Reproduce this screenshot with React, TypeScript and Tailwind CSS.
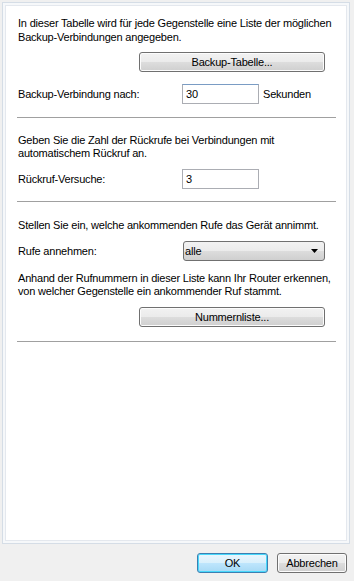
import React from 'react';

const font = { fontFamily: '"Liberation Sans", Arial, sans-serif', letterSpacing: '-0.2px' };

function WinButton({ label, className = '' }: { label: string; className?: string }) {
  return (
    <button
      className={`h-5 rounded-[3px] border border-[#707070] text-[11px] text-black leading-none
                  bg-[linear-gradient(#f2f2f2_0%,#ebebeb_49%,#dddddd_50%,#cfcfcf_100%)]
                  shadow-[inset_0_0_0_1px_#fcfcfc] ${className}`}
    >
      {label}
    </button>
  );
}

function Separator({ className = '' }: { className?: string }) {
  return <div className={`h-px bg-[#a0a0a0] ${className}`} />;
}

export default function App() {
  return (
    <div className="w-[354px] h-[581px] bg-[#f0f0f0] flex flex-col text-[11px] text-black" style={font}>
      {/* Panel */}
      <div className="mt-[2px] ml-[2px] mr-[4px] h-[542px] border border-[#d5dde6] bg-[#f6f8fa] p-[2px]">
        <div className="h-full bg-white border border-[#e4e8ee] pl-[11px] pr-[10px] pt-[10px]">

          {/* Backup */}
          <p className="leading-[14px] pl-px">
            In dieser Tabelle wird für jede Gegenstelle eine Liste der möglichen Backup-Verbindungen angegeben.
          </p>
          <div className="flex justify-end mt-[8px] mr-[11px]">
            <WinButton label="Backup-Tabelle..." className="w-[186px]" />
          </div>
          <div className="flex items-center mt-[12px] h-5 pl-px">
            <span className="w-[164px]">Backup-Verbindung nach:</span>
            <div className="w-[77px] h-5 border border-[#abadb3] border-t-[#7a9cc4] flex items-center px-[3px]">30</div>
            <span className="ml-[4px]">Sekunden</span>
          </div>
          <Separator className="mt-[13px]" />

          {/* Rückruf */}
          <p className="leading-[13px] mt-[16px] pl-px">
            Geben Sie die Zahl der Rückrufe bei Verbindungen mit automatischem Rückruf an.
          </p>
          <div className="flex items-center mt-[9px] h-5 pl-px">
            <span className="w-[164px]">Rückruf-Versuche:</span>
            <div className="w-[77px] h-5 border border-[#abadb3] flex items-center px-[3px]">3</div>
          </div>
          <Separator className="mt-[12px]" />

          {/* Rufe */}
          <p className="leading-[14px] mt-[16px] pl-px">
            Stellen Sie ein, welche ankommenden Rufe das Gerät annimmt.
          </p>
          <div className="flex items-center mt-[9px] h-5 pl-px mr-[11px]">
            <span className="w-[165px]">Rufe annehmen:</span>
            <div className="flex-1 h-5 rounded-[3px] border border-[#707070] flex items-center justify-between pl-[1px] pr-[5px]
                            bg-[linear-gradient(#f2f2f2_0%,#ebebeb_49%,#dddddd_50%,#cfcfcf_100%)]">
              <span>alle</span>
              <svg width="8" height="4" viewBox="0 0 8 4"><path d="M0 0h7L3.5 4z" fill="#000" /></svg>
            </div>
          </div>
          <p className="leading-[13px] mt-[11px] pl-px">
            Anhand der Rufnummern in dieser Liste kann Ihr Router erkennen, von welcher Gegenstelle ein ankommender Ruf stammt.
          </p>
          <div className="flex justify-end mt-[9px] mr-[11px]">
            <WinButton label="Nummernliste..." className="w-[186px]" />
          </div>
          <Separator className="mt-[14px]" />
        </div>
      </div>

      {/* Footer buttons */}
      <div className="flex justify-end gap-[9px] pr-[7px] mt-[9px]">
        <button className="w-[71px] h-[20px] rounded-[3px] border border-[#3c7fb1] text-[11px]
                           bg-[linear-gradient(#eaf6fd_0%,#d9f0fc_49%,#bee6fd_50%,#a7d9f5_100%)]
                           shadow-[inset_0_0_0_1px_#48d8fb]">
          OK
        </button>
        <WinButton label="Abbrechen" className="w-[70px]" />
      </div>
    </div>
  );
}
